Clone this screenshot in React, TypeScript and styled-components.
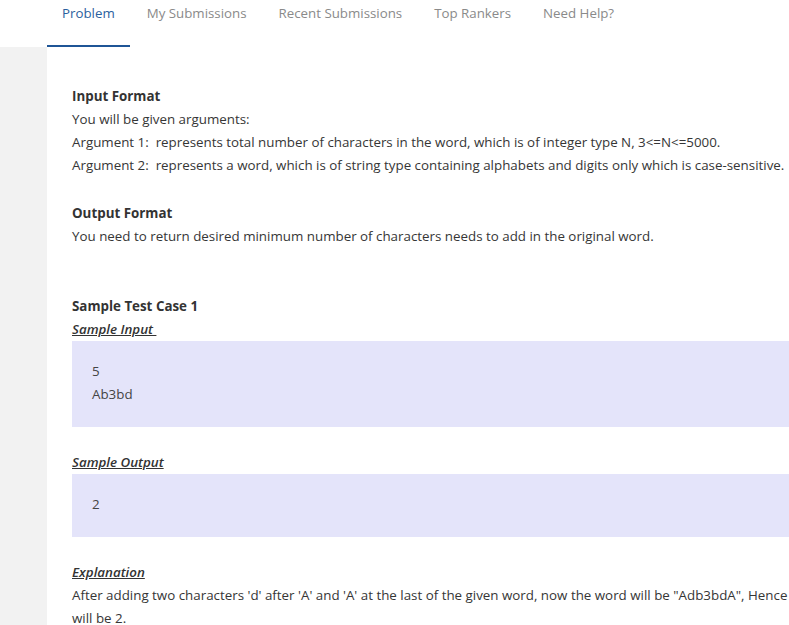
import React from "react";
import styled, { createGlobalStyle } from "styled-components";

const Global = createGlobalStyle`
  html, body { margin: 0; padding: 0; background: #ffffff; overflow: hidden; }
  body { font-family: "Open Sans", "Noto Sans", sans-serif; }
`;

const Page = styled.div`
  width: 789px;
  height: 625px;
  display: flex;
  flex-direction: column;
  overflow: hidden;
`;

const TabBar = styled.nav`
  height: 47px;
  display: flex;
  align-items: stretch;
  gap: 2px;
  padding-left: 47px;
  background: #ffffff;
  flex-shrink: 0;
`;

const Tab = styled.div<{ $active?: boolean }>`
  padding: 4px 15px 0;
  font-size: 13.3px;
  color: ${(p) => (p.$active ? "#2b5f9e" : "#8a8a8a")};
  border-bottom: 2px solid ${(p) => (p.$active ? "#1f5596" : "transparent")};
  white-space: nowrap;
`;

const Body = styled.div`
  flex: 1;
  display: flex;
  min-height: 0;
`;

const Gutter = styled.div`
  width: 47px;
  flex-shrink: 0;
  background: #f2f2f2;
`;

const Content = styled.main`
  flex: 1;
  min-width: 0;
  padding: 38px 0 0 25px;
  color: #363636;
  font-size: 13.35px;
  line-height: 23px;
  overflow: hidden;
`;

const Section = styled.section<{ $gap?: number }>`
  margin-bottom: ${(p) => p.$gap ?? 0}px;
  white-space: nowrap;
`;

const Heading = styled.div`
  font-weight: 700;
  color: #333;
`;

const SubHeading = styled.div`
  font-style: italic;
  font-weight: 600;
  text-decoration: underline;
  color: #333;
`;

const Line = styled.div``;

const SampleBox = styled.div<{ $height: number }>`
  width: 900px;
  height: ${(p) => p.$height}px;
  background: #e4e4fa;
  padding: 19px 20px 0;
  box-sizing: border-box;
  color: #444;
  margin-bottom: 24px;
`;

const tabs = ["Problem", "My Submissions", "Recent Submissions", "Top Rankers", "Need Help?"];

export default function App() {
  return (
    <Page>
      <Global />
      <TabBar>
        {tabs.map((t, i) => (
          <Tab key={t} $active={i === 0}>
            {t}
          </Tab>
        ))}
      </TabBar>
      <Body>
        <Gutter />
        <Content>
          <Section $gap={25}>
            <Heading>Input Format</Heading>
            <Line>You will be given arguments:</Line>
            <Line>Argument 1:&nbsp; represents total number of characters in the word, which is of integer type N, 3&lt;=N&lt;=5000.</Line>
            <Line>Argument 2:&nbsp; represents a word, which is of string type containing alphabets and digits only which is case-sensitive.</Line>
          </Section>
          <Section $gap={47}>
            <Heading>Output Format</Heading>
            <Line>You need to return desired minimum number of characters needs to add in the original word.</Line>
          </Section>
          <Section>
            <Heading>Sample Test Case 1</Heading>
            <SubHeading>Sample Input&nbsp;</SubHeading>
            <SampleBox $height={86}>
              <Line>5</Line>
              <Line>Ab3bd</Line>
            </SampleBox>
            <SubHeading>Sample Output</SubHeading>
            <SampleBox $height={63}>
              <Line>2</Line>
            </SampleBox>
            <SubHeading>Explanation</SubHeading>
            <Line>After adding two characters 'd' after 'A' and 'A' at the last of the given word, now the word will be "Adb3bdA", Hence the answer</Line>
            <Line>will be 2.</Line>
          </Section>
        </Content>
      </Body>
    </Page>
  );
}
